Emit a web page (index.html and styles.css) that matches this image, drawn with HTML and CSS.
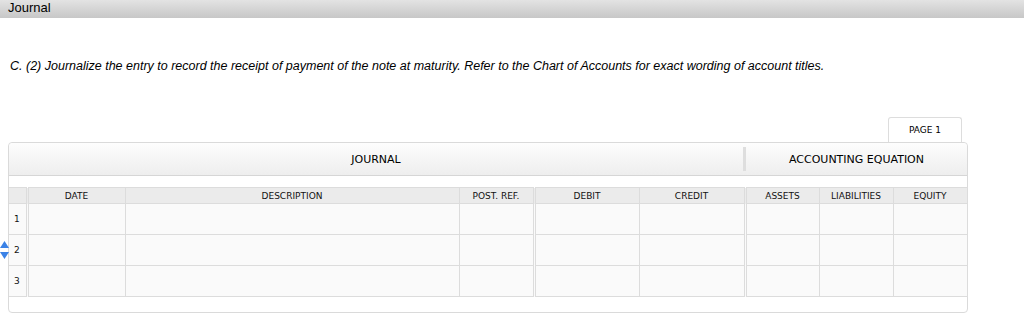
FILE: index.html
```html
<!DOCTYPE html>
<html lang="en">
<head>
  <meta charset="UTF-8" />
  <title>Journal</title>
  <link rel="stylesheet" href="styles.css">
</head>
<body>

<div class="topbar">Journal</div>

<p class="prompt">C. (2) Journalize the entry to record the receipt of payment of the note at maturity. Refer to the Chart of Accounts for exact wording of account titles.</p>

<div class="sheet">
  <div class="tabs">
    <div class="tab">PAGE 1</div>
  </div>

  <div class="panel">
    <div class="panel-head">
      <div class="head-journal">JOURNAL</div>
      <div class="head-sep"></div>
      <div class="head-acct">ACCOUNTING EQUATION</div>
    </div>

    <table class="grid">
      <colgroup>
        <col style="width:18px">
        <col style="width:98px">
        <col style="width:334px">
        <col style="width:75px">
        <col style="width:105px">
        <col style="width:106px">
        <col style="width:74px">
        <col style="width:74px">
        <col style="width:74px">
      </colgroup>
      <thead>
        <tr>
          <th class="num split"></th>
          <th>DATE</th>
          <th>DESCRIPTION</th>
          <th class="split">POST. REF.</th>
          <th>DEBIT</th>
          <th class="split">CREDIT</th>
          <th>ASSETS</th>
          <th>LIABILITIES</th>
          <th>EQUITY</th>
        </tr>
      </thead>
      <tbody>
        <tr>
          <td class="num split">1</td>
          <td></td><td></td><td class="split"></td><td></td><td class="split"></td><td></td><td></td><td></td>
        </tr>
        <tr>
          <td class="num split">
            <span class="mover">
              <svg width="9" height="20" viewBox="0 0 9 20"><path d="M4.5 1 L9 8 L0 8 Z" fill="#3b82e6"/><path d="M0 12 L9 12 L4.5 19 Z" fill="#3b82e6"/></svg>
            </span>2
          </td>
          <td></td><td></td><td class="split"></td><td></td><td class="split"></td><td></td><td></td><td></td>
        </tr>
        <tr>
          <td class="num split">3</td>
          <td></td><td></td><td class="split"></td><td></td><td class="split"></td><td></td><td></td><td></td>
        </tr>
      </tbody>
    </table>
  </div>
</div>

</body>
</html>
```

FILE: styles.css
```css
body {
  margin: 0;
  font-family: 'Liberation Sans', Arial, sans-serif;
  color: #000;
  background: #fff;
}

.topbar {
  height: 18px;
  line-height: 16px;
  padding-left: 8px;
  font-size: 13px;
  background: linear-gradient(#e3e3e3, #c7c7c7);
}

.prompt {
  margin: 41px 0 0 10px;
  font-size: 12.5px;
  line-height: 15px;
  font-style: italic;
}

.sheet {
  margin: 43px 0 0 8px;
  width: 960px;
}

.tabs {
  display: flex;
  justify-content: flex-end;
  padding-right: 6px;
}

.tab {
  width: 72px;
  height: 24px;
  line-height: 24px;
  border: 1px solid #ddd;
  border-bottom: none;
  border-radius: 3px 3px 0 0;
  background: #fff;
  text-align: center;
  font-family: 'DejaVu Sans', Verdana, sans-serif;
  font-size: 9px;
}

.panel {
  border: 1px solid #dadada;
  border-radius: 4px;
  padding-bottom: 15px;
  background: #fff;
}

.panel-head {
  display: flex;
  align-items: center;
  height: 32px;
  border-bottom: 1px solid #d6d6d6;
  background: linear-gradient(#fdfdfd, #eeeeee);
  border-radius: 4px 4px 0 0;
  font-family: 'DejaVu Sans', Verdana, sans-serif;
  font-size: 11px;
}

.head-journal {
  width: 734px;
  text-align: center;
}

.head-sep {
  width: 3px;
  height: 24px;
  background: #dedede;
}

.head-acct {
  flex: 1;
  text-align: center;
}

.grid {
  margin-top: 11px;
  width: 958px;
  table-layout: fixed;
  border-collapse: collapse;
  font-family: 'DejaVu Sans', Verdana, sans-serif;
  font-size: 9px;
  color: #111;
}

.grid th,
.grid td {
  border: 1px solid #dcdcdc;
  padding: 0;
}

.grid th {
  height: 15px;
  background: #ebebeb;
  font-weight: normal;
  text-align: center;
}

.grid td {
  height: 30px;
  background: #fafafa;
}

.grid tr > :first-child {
  border-left: none;
}

.grid tr > :last-child {
  border-right: 1px solid #dcdcdc;
}

.grid .split {
  border-right: 3px double #dcdcdc;
}

.grid td.num {
  position: relative;
  padding-left: 5px;
  background: #fafafa;
}

.mover {
  position: absolute;
  left: -9px;
  top: 5px;
  line-height: 0;
}
```
